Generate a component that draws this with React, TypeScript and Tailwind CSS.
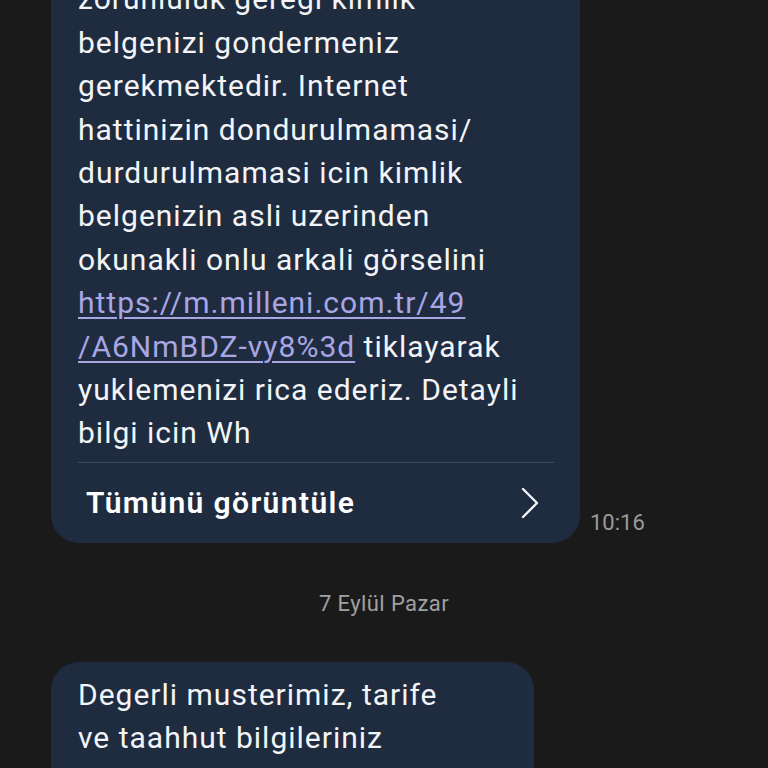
import React from "react";

const font = { fontFamily: "Roboto, 'Noto Sans', sans-serif" };

function Line({ children }: { children: React.ReactNode }) {
  return <div className="h-[43.4px] leading-[43.4px] whitespace-nowrap">{children}</div>;
}

export default function App() {
  return (
    <div className="w-[768px] h-[768px] overflow-hidden bg-[#1a1a1a] text-white" style={font}>
      <div className="-mt-[85px] flex flex-col">
        <div className="flex items-end pl-[51px]">
          <div className="w-[529px] rounded-[28px] bg-[#1f2c40] pl-[27px] pr-[26px] pt-[19px]">
            <div className="text-[30px] text-[#f2f4f7] tracking-[1px]">
              <Line>Sayin abonemiz, BTK Yonetmeligi</Line>
              <Line>zorunluluk geregi kimlik</Line>
              <Line>belgenizi gondermeniz</Line>
              <Line>gerekmektedir. Internet</Line>
              <Line>hattinizin dondurulmamasi/</Line>
              <Line>durdurulmamasi icin kimlik</Line>
              <Line>belgenizin asli uzerinden</Line>
              <Line>okunakli onlu arkali görselini</Line>
              <Line>
                <span className="text-[#a9a6e4] underline decoration-[1.5px] underline-offset-[4px]">https://m.milleni.com.tr/49</span>
              </Line>
              <Line>
                <span className="text-[#a9a6e4] underline decoration-[1.5px] underline-offset-[4px]">/A6NmBDZ-vy8%3d</span> tiklayarak
              </Line>
              <Line>yuklemenizi rica ederiz. Detayli</Line>
              <Line>bilgi icin Wh</Line>
            </div>
            <div className="mt-[7px] h-px bg-[#3b4a5e]" />
            <div className="flex items-center justify-between h-[80px] pl-[8px] pr-[14px]">
              <span className="text-[30px] font-semibold text-white tracking-[1.4px]">Tümünü görüntüle</span>
              <svg width="20" height="32" viewBox="0 0 20 32" fill="none">
                <path d="M3 2 L17 16 L3 30" stroke="#f2f4f7" strokeWidth="2.4" strokeLinecap="round" strokeLinejoin="round" />
              </svg>
            </div>
          </div>
          <div className="ml-[10px] mb-[4px] text-[22px] text-[#9b9b9b]">10:16</div>
        </div>
        <div className="mt-[44px] flex justify-center">
          <span className="text-[22px] text-[#a0a0a0] tracking-[0.4px]">7 Eylül Pazar</span>
        </div>
        <div className="mt-[42px] pl-[51px]">
          <div className="w-[483px] rounded-[28px] bg-[#1f2c40] pl-[27px] pr-[26px] pt-[11px] pb-[20px]">
            <div className="text-[30px] text-[#f2f4f7] tracking-[1px]">
              <Line>Degerli musterimiz, tarife</Line>
              <Line>ve taahhut bilgileriniz</Line>
              <Line>asagidaki gibidir. Internet</Line>
            </div>
          </div>
        </div>
      </div>
    </div>
  );
}
